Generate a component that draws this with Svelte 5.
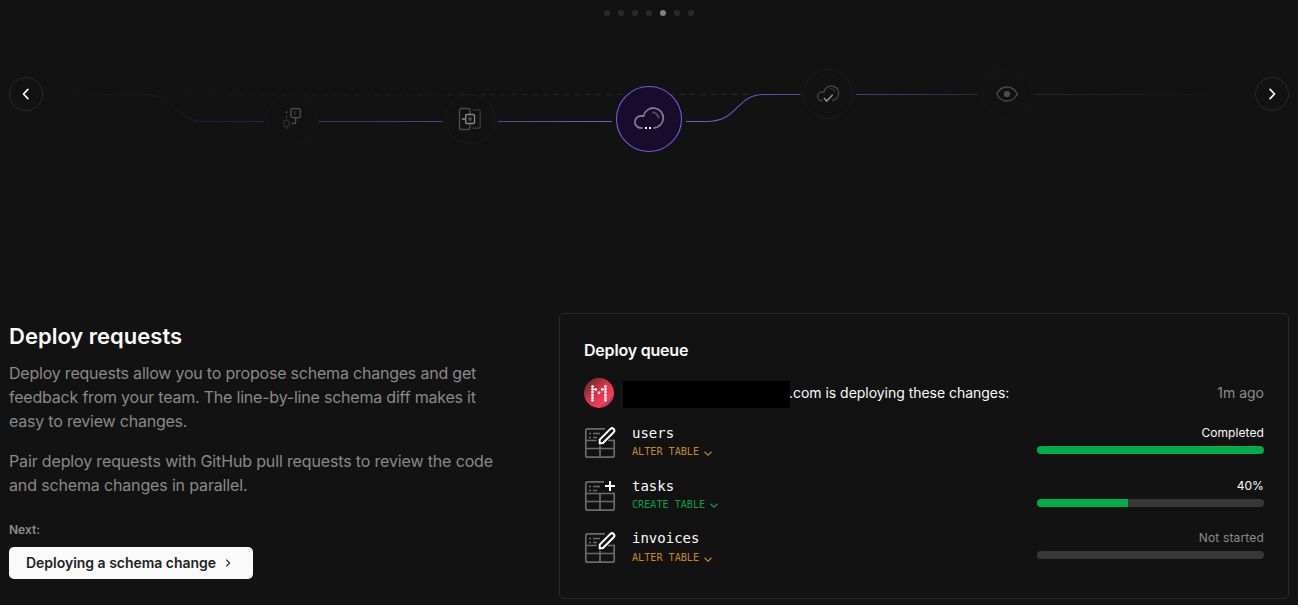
<script>
  const slides = [0, 1, 2, 3, 4, 5, 6];
  const active = 4;
  const jobs = [
    { name: 'users', action: 'ALTER TABLE', kind: 'alter', status: 'Completed', progress: 100 },
    { name: 'tasks', action: 'CREATE TABLE', kind: 'create', status: '40%', progress: 40 },
    { name: 'invoices', action: 'ALTER TABLE', kind: 'alter', status: 'Not started', progress: 0 }
  ];
  const logoDots = [
    [8.5, 8.5], [8.5, 11.3], [8.5, 14.1], [8.5, 16.9], [8.5, 19.7], [8.5, 22.3],
    [11.6, 11.4], [15, 14.8], [18.4, 11.4],
    [21.5, 8.5], [21.5, 11.3], [21.5, 14.1], [21.5, 16.9], [21.5, 19.7], [21.5, 22.3]
  ];
</script>

<main>
  <nav class="dots">
    {#each slides as i}<span class:active={i === active}></span>{/each}
  </nav>

  <section class="timeline">
    <button class="arrow" aria-label="Previous">
      <svg width="10" height="14" viewBox="0 0 10 14"><path d="M6.900 2.300 2.500 7l4.400 4.700" /></svg>
    </button>
    <svg class="flow" width="1212" height="92" viewBox="43 68 1212 92" fill="none">
      <defs>
        <linearGradient id="fadeIn" gradientUnits="userSpaceOnUse" x1="60" y1="0" x2="264" y2="0">
          <stop offset="0" stop-color="#1b1b1b" stop-opacity="0" />
          <stop offset=".35" stop-color="#1b1b1b" />
          <stop offset=".6" stop-color="#1c1a2a" />
          <stop offset="1" stop-color="#2b2645" />
        </linearGradient>
        <linearGradient id="seg2" gradientUnits="userSpaceOnUse" x1="318" y1="0" x2="442" y2="0">
          <stop stop-color="#3a3163" /><stop offset="1" stop-color="#4f4290" />
        </linearGradient>
        <linearGradient id="seg3" gradientUnits="userSpaceOnUse" x1="498" y1="0" x2="612" y2="0">
          <stop stop-color="#5447a0" /><stop offset="1" stop-color="#7259de" />
        </linearGradient>
        <linearGradient id="seg4" gradientUnits="userSpaceOnUse" x1="686" y1="0" x2="800" y2="0">
          <stop stop-color="#7459e0" /><stop offset="1" stop-color="#5948a8" />
        </linearGradient>
        <linearGradient id="seg5" gradientUnits="userSpaceOnUse" x1="856" y1="0" x2="979" y2="0">
          <stop stop-color="#4a3f83" /><stop offset=".4" stop-color="#3d3767" /><stop offset="1" stop-color="#292929" />
        </linearGradient>
        <linearGradient id="fadeOut" gradientUnits="userSpaceOnUse" x1="1035" y1="0" x2="1240" y2="0">
          <stop stop-color="#292929" /><stop offset="1" stop-color="#292929" stop-opacity="0" />
        </linearGradient>
        <linearGradient id="dash" gradientUnits="userSpaceOnUse" x1="150" y1="0" x2="750" y2="0">
          <stop stop-color="#1c1c1c" stop-opacity="0" /><stop offset=".3" stop-color="#1c1c1c" /><stop offset="1" stop-color="#2a2a2a" />
        </linearGradient>
      </defs>
      <path d="M60 94.5h85c30 0 30 27 60 27h59" stroke="url(#fadeIn)" />
      <path d="M318 121.5h124.5v.01" stroke="url(#seg2)" />
      <path d="M498 121.5h114v.01" stroke="url(#seg3)" />
      <path d="M686 121.5h20c34 0 29-27 58-27h36.5" stroke="url(#seg4)" stroke-width="1.1" />
      <path d="M856 94.5h123v.01" stroke="url(#seg5)" />
      <path d="M1035 94.5h205v.01" stroke="url(#fadeOut)" />
      <path d="M150 94.5h600v.01" stroke="url(#dash)" stroke-dasharray="5.5 5" stroke-dashoffset="6" />

      <g fill="#121212" stroke="#171717">
        <circle cx="291" cy="119" r="24.5" />
        <circle cx="470" cy="119" r="24.5" stroke="#1b1b1b" />
        <circle cx="828" cy="94" r="24.5" stroke="#1c1c1c" />
        <circle cx="1007" cy="94" r="24.5" />
      </g>
      <circle cx="649" cy="119" r="32.5" fill="#180b2c" stroke="#7459df" stroke-width="1.1" />

      <g stroke-width="1.3" stroke="#2e2e2e">
        <rect x="283.6" y="120.6" width="5.6" height="5.8" rx="1.3" />
        <path d="M286.5 115.5v5M286.5 126.5v3" />
        <path d="M286.5 111.5v1.5" stroke="#656565" />
        <path d="M293.5 111.8h1.5v4" stroke="#303030" />
        <g stroke="#505050">
          <rect x="290.9" y="108.6" width="9.4" height="9" rx="1.5" />
          <path d="M295.6 118v4.300q0 1.200-1.200 1.200h-2.600" />
        </g>
      </g>

      <g stroke-width="1.4" stroke="#4b4b4b">
        <path d="M470 114v-4q0-1.500-1.500-1.500h-7.500q-1.500 0-1.500 1.500v18q0 1.500 1.500 1.500h7.500q1.500 0 1.500-1.500v-4" />
        <path d="M472.500 109.900h6q1.700 0 1.700 1.500v15.300q0 1.500-1.700 1.500h-6" stroke="#383838" />
        <rect x="465.7" y="114.5" width="8.8" height="9" rx="1.2" stroke="#858585" />
        <path d="M462 119h4" stroke="#858585" stroke-width="1.6" />
        <circle cx="470" cy="119" r="1.9" fill="#4f4f4f" stroke="none" />
      </g>

      <g stroke="#81778f" stroke-width="1.8">
        <path d="M642.500 128h-1.600a6 6 0 0 1 0-12h2.600a10 10 0 1 1 10 12" />
        <path d="M652 112.300a6.300 6.300 0 0 1 6.600 6" stroke="#514663" stroke-width="2" />
        <path d="M645 128h2M649 128h2" stroke="#fff" stroke-width="2" />
      </g>

      <g stroke="#424242" stroke-width="1.5">
        <path d="M822.500 100.800h-.5a4.400 4.400 0 0 1 0-8.900h2a7.400 7.400 0 1 1 8 8.800" />
        <path d="M829.800 88.400a4.800 4.800 0 0 1 5.100 4.400" stroke="#303030" />
        <path d="m824 98 2.700 3 6-6.300" stroke="#8c8c8c" stroke-width="1.6" />
      </g>

      <path d="M996.600 94c2-4 5.900-7 10.400-7s8.400 3 10.400 7c-2 4-5.900 7-10.400 7s-8.400-3-10.400-7z" stroke="#484848" stroke-width="1.4" />
      <circle cx="1007" cy="94" r="3.1" fill="#4d4d4d" />
    </svg>
    <button class="arrow" aria-label="Next">
      <svg width="10" height="14" viewBox="0 0 10 14"><path d="m3.100 2.300 4.400 4.700-4.400 4.700" /></svg>
    </button>
  </section>

  <section class="content">
    <article>
      <h1>Deploy requests</h1>
      <p>Deploy requests allow you to propose schema changes and get feedback from your team. The line-by-line schema diff makes it easy to review changes.</p>
      <p>Pair deploy requests with GitHub pull requests to review the code and schema changes in parallel.</p>
      <div class="next">Next:</div>
      <button class="cta">
        <span>Deploying a schema change</span>
        <svg width="6" height="8" viewBox="0 0 6 8"><path d="M1.300.700 4.600 4 1.300 7.300" /></svg>
      </button>
    </article>

    <aside>
      <h2>Deploy queue</h2>
      <div class="author">
        <svg class="avatar" width="30" height="30" viewBox="0 0 30 30">
          <defs>
            <linearGradient id="av" x1="0.1" y1="0.08" x2="0.9" y2="0.95">
              <stop stop-color="#632b26" /><stop offset=".42" stop-color="#d23446" />
              <stop offset=".78" stop-color="#f93c55" /><stop offset="1" stop-color="#51327d" />
            </linearGradient>
          </defs>
          <circle cx="15" cy="15" r="15" fill="url(#av)" />
          {#each logoDots as [x, y]}<circle cx={x} cy={y} r="1.35" fill="#fff" />{/each}
        </svg>
        <span class="mask"></span>
        <span class="who">.com is deploying these changes:</span>
        <time>1m ago</time>
      </div>

      {#each jobs as job}
        <div class="job">
          <svg class="table" width="32" height="32" viewBox="0 0 32 32" fill="none">
            {#if job.kind === 'create'}
              <path d="M20 1.800H3.600Q1.800 1.800 1.800 3.600v24.800q0 1.800 1.800 1.800h24.800q1.800 0 1.800-1.800V12.500M2 13.500h28M2 21.500h28M16 13.500V30" />
              <path class="bits" d="M5 6.500h2M9 6.500h7M5 10.500h2M9 10.500h4" />
              <path class="mark" d="M26 1v10M21 6h10" />
            {:else}
              <path d="M21 1.800H3.600Q1.800 1.800 1.800 3.600v24.800q0 1.800 1.800 1.800h24.800q1.800 0 1.800-1.800V12.500M2 13.500h10.500M24 13.500h6M2 21.500h28M16 19V30" />
              <path class="bits" d="M5 6.500h2M9 6.500h7M5 10.500h2M9 10.500h4" />
              <path class="mark pencil" d="M15.700 16.400v-3.800L26.400 1.900q1.700-1.500 3.300 0 1.500 1.600 0 3.300L19 16l-3.300.4z" />
            {/if}
          </svg>
          <div class="info">
            <div class="name">{job.name}</div>
            <div class="action {job.kind}">
              {job.action}
              <svg width="8" height="5" viewBox="0 0 8 5"><path d="M.500.700 4 4.100 7.500.700" /></svg>
            </div>
          </div>
          <div class="status" class:idle={job.progress === 0}>
            <span>{job.status}</span>
            <div class="track"><div class="fill" style="width: {job.progress}%"></div></div>
          </div>
        </div>
      {/each}
    </aside>
  </section>
</main>

<style>
  :global(body) { background: #121212; }
  main {
    box-sizing: border-box;
    width: 1298px;
    height: 605px;
    padding: 10px 9px 0;
    overflow: hidden;
    background: #121212;
    color: #fafafa;
    font-family: Inter, sans-serif;
  }
  button { font: inherit; border: 0; margin: 0; padding: 0; }
  .dots { display: flex; justify-content: center; gap: 8px; height: 6px; }
  .dots span { width: 6px; height: 6px; border-radius: 50%; background: #292929; }
  .dots .active { background: #818181; }
  .timeline { display: flex; height: 92px; margin-top: 52px; }
  .arrow {
    box-sizing: border-box;
    flex: none;
    display: grid;
    place-items: center;
    width: 34px;
    height: 34px;
    margin-top: 9px;
    border: 1px solid #292929;
    border-radius: 50%;
    background: transparent;
  }
  .arrow path { fill: none; stroke: #fafafa; stroke-width: 1.7; stroke-linecap: round; stroke-linejoin: round; }
  .flow { flex: none; }
  .content { display: flex; justify-content: space-between; margin-top: 153px; }
  article { width: 500px; padding-top: 9px; }
  h1 { margin: 0; font-size: 22px; line-height: 28px; font-weight: 600; }
  p { width: 488px; margin: 11px 0 0; font-size: 16px; line-height: 24px; letter-spacing: -0.21px; color: #898989; }
  p + p { margin-top: 16px; letter-spacing: -0.15px; }
  .next { margin-top: 24px; font-size: 12px; line-height: 18px; font-weight: 600; color: #8c8c8c; }
  .cta {
    display: flex;
    align-items: center;
    gap: 9px;
    width: 244px;
    height: 32px;
    margin-top: 8px;
    padding-left: 17px;
    border-radius: 5px;
    background: #fafafa;
    color: #232323;
    font-size: 14px;
    font-weight: 600;
    letter-spacing: -0.02px;
    white-space: nowrap;
  }
  .cta span { padding-bottom: 2px; }
  .cta path { fill: none; stroke: #232323; stroke-width: 1.2; }
  aside {
    box-sizing: border-box;
    width: 730px;
    height: 286px;
    padding: 25px 24px 0;
    border: 1px solid #292929;
    border-radius: 5px;
  }
  h2 { margin: 0; font-size: 16px; line-height: 22px; font-weight: 600; letter-spacing: -0.2px; }
  .author { display: flex; align-items: center; height: 30px; margin-top: 17px; font-size: 14px; }
  .mask { width: 167px; height: 27px; margin: 2px 0 0 9px; background: #000; }
  .who { margin-left: -1px; padding-bottom: 2px; letter-spacing: -0.03px; }
  time { margin-left: auto; padding-bottom: 2px; color: #8c8c8c; }
  .job { display: flex; height: 32px; margin-top: 20.5px; }
  .author + .job { margin-top: 19px; }
  .table { stroke: #6b6b6b; stroke-width: 1.7; }
  .bits { stroke-width: 1.3; }
  .mark { stroke: #fff; stroke-width: 2; }
  .pencil { stroke-width: 2; stroke-linejoin: round; }
  .info { margin: -4px 0 0 16px; font-family: "DejaVu Sans Mono", monospace; }
  .name { font-size: 14px; line-height: 20px; }
  .action { display: flex; align-items: center; gap: 5px; padding-top: 1px; font-size: 10.15px; line-height: 16px; }
  .job:last-child .action { padding-top: 2px; }
  .action svg { fill: none; stroke: currentColor; stroke-width: 1.2; margin-top: 2px; }
  .alter { color: #c58820; }
  .create { color: #00a344; }
  .status { display: flex; flex-direction: column; width: 227px; margin: -3px 0 0 auto; font-size: 12px; line-height: 18px; text-align: right; letter-spacing: 0.08px; }
  .idle { color: #8c8c8c; letter-spacing: 0.16px; }
  .track { height: 8px; margin-top: 4px; border-radius: 4px; overflow: hidden; background: #383838; }
  .fill { height: 100%; background: #00ad48; }
</style>
